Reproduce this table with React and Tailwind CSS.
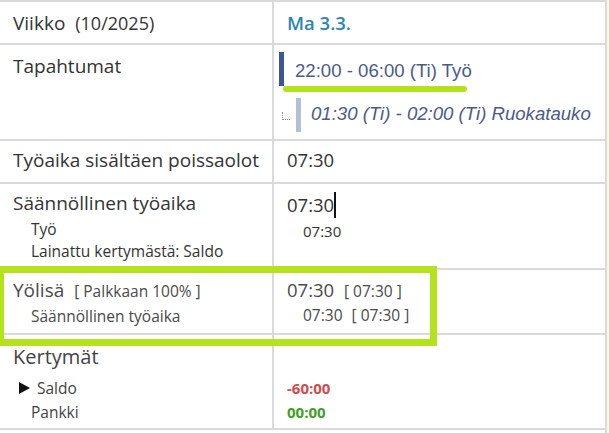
import React from 'react';

const line = 'border-[#dadada]';

function Row({ h, left, right, leftClass = '', rightClass = '' }) {
  return (
    <div className={`flex border-b-2 ${line} ${h}`}>
      <div className={`w-[274px] shrink-0 border-r-2 ${line} pl-[13px] ${leftClass}`}>{left}</div>
      <div className={`flex-1 ${rightClass}`}>{right}</div>
    </div>
  );
}

export default function App() {
  return (
    <div className="relative w-[609px] h-[433px] bg-white flex font-['Open_Sans',sans-serif] text-[#333]">
      <div className={`w-[607px] border-t-2 border-r-2 ${line}`}>
        {/* Viikko */}
        <Row
          h="h-[43px]"
          leftClass="pt-[9px]"
          rightClass="pt-[9px] pl-[13px]"
          left={
            <div className="text-[19px] leading-[24px]">
              Viikko <span className="ml-[5px] text-[18px]">(10/2025)</span>
            </div>
          }
          right={<div className="text-[18.5px] leading-[24px] font-semibold text-[#2a86b6]">Ma 3.3.</div>}
        />

        {/* Tapahtumat */}
        <Row
          h="h-[96px]"
          leftClass="pt-[9px]"
          rightClass="pt-[7px] pl-[5px]"
          left={<div className="text-[19px] leading-[24px]">Tapahtumat</div>}
          right={
            <div className="font-['Liberation_Sans',Arial,sans-serif] text-[18.6px] leading-[22px] text-[#4b5a8b]">
              <div className="flex items-start">
                <div className="w-[5px] h-[34px] bg-[#3c5893]" />
                <div className="ml-[11px] mt-[8px]">22:00 - 06:00 (Ti) Työ</div>
              </div>
              <div className="flex items-start mt-[12px] pl-[3px]">
                <div className="w-[8px] h-[8px] mt-[14px] border-l border-b border-dotted border-[#8a8a8a]" />
                <div className="ml-[6px] w-[5px] h-[34px] bg-[#b3bed9]" />
                <div className="ml-[10px] mt-[5px] italic">01:30 (Ti) - 02:00 (Ti) Ruokatauko</div>
              </div>
            </div>
          }
        />

        {/* Työaika sisältäen poissaolot */}
        <Row
          h="h-[43px]"
          leftClass="pt-[7px]"
          rightClass="pt-[7px] pl-[13px]"
          left={<div className="text-[19px] leading-[24px]">Työaika sisältäen poissaolot</div>}
          right={<div className="text-[18.5px] leading-[24px]">07:30</div>}
        />

        {/* Säännöllinen työaika */}
        <Row
          h="h-[86px]"
          leftClass="pt-[7px]"
          rightClass="pt-[8px] pl-[13px]"
          left={
            <div>
              <div className="text-[19px] leading-[24px]">Säännöllinen työaika</div>
              <div className="mt-[3px] pl-[18px] text-[15.5px] leading-[22px]">
                <div>Työ</div>
                <div>Lainattu kertymästä: Saldo</div>
              </div>
            </div>
          }
          right={
            <div>
              <div className="flex items-center text-[18.5px] leading-[24px]">
                07:30
                <span className="inline-block w-[2px] h-[26px] bg-[#111]" />
              </div>
              <div className="mt-[2px] pl-[16px] text-[15px] leading-[22px]">07:30</div>
            </div>
          }
        />

        {/* Yölisä */}
        <Row
          h="h-[65px]"
          leftClass="pt-[8px] text-[#4a4a4a]"
          rightClass="pt-[8px] pl-[13px] text-[#4a4a4a]"
          left={
            <div>
              <div className="text-[19px] leading-[24px]">
                Yölisä <span className="ml-[5px] text-[15.5px]">[ Palkkaan 100% ]</span>
              </div>
              <div className="mt-[2px] pl-[18px] text-[15.5px] leading-[22px]">Säännöllinen työaika</div>
            </div>
          }
          right={
            <div>
              <div className="text-[18.5px] leading-[24px]">
                07:30 <span className="ml-[5px] text-[15.5px]">[ 07:30 ]</span>
              </div>
              <div className="mt-[1px] pl-[16px] text-[15.5px] leading-[22px]">
                07:30 <span className="ml-[5px]">[ 07:30 ]</span>
              </div>
            </div>
          }
        />

        {/* Kertymät */}
        <Row
          h="h-[95px]"
          leftClass="pt-[9px] text-[#444]"
          rightClass="pt-[9px] pl-[13px]"
          left={
            <div>
              <div className="text-[20px] leading-[26px]">Kertymät</div>
              <div className="mt-[6px] text-[15.5px] leading-[24px]">
                <div className="flex items-center pl-[6px]">
                  <svg width="11" height="12" viewBox="0 0 11 12" className="shrink-0">
                    <polygon points="0,0 11,6 0,12" fill="#111" />
                  </svg>
                  <span className="ml-[7px]">Saldo</span>
                </div>
                <div className="pl-[18px]">Pankki</div>
              </div>
            </div>
          }
          right={
            <div>
              <div className="h-[26px]" />
              <div className="mt-[6px] text-[15px] leading-[24px] font-bold">
                <div className="text-[#d24b4b]">-60:00</div>
                <div className="text-[#3fa024]">00:00</div>
              </div>
            </div>
          }
        />
      </div>
      <div className="w-[2px] bg-[#fdf9dc]" />

      {/* annotation overlays */}
      <div className="absolute left-[283px] top-[86px] w-[184px] h-[6px] rounded-full bg-[#b4e31b]" />
      <div className="absolute left-[-3px] top-[266px] w-[440px] h-[80px] border-[7px] border-[#b4e31b]" />
    </div>
  );
}
